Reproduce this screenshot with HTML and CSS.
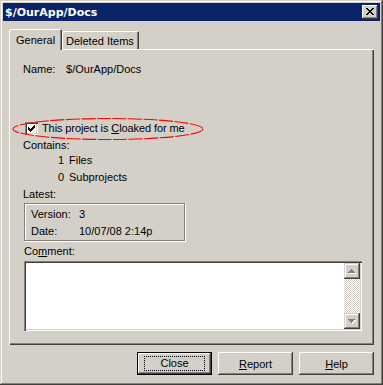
FILE: index.html
```html
<!doctype html>
<html lang="en">
<head>
  <meta charset="UTF-8">
  <title>$/OurApp/Docs</title>
  <link rel="stylesheet" href="styles.css">
</head>
<body>
  <div class="window">
    <div class="titlebar">
      <span class="title">$/OurApp/Docs</span>
      <div class="title-close">
        <svg width="8" height="7" viewBox="0 0 8 7" shape-rendering="crispEdges">
          <path fill="#000" d="M0 0h2v1h-2z M6 0h2v1h-2z M1 1h2v1h-2z M5 1h2v1h-2z M2 2h4v1h-4z M3 3h2v1h-2z M2 4h4v1h-4z M1 5h2v1h-2z M5 5h2v1h-2z M0 6h2v1h-2z M6 6h2v1h-2z"/>
        </svg>
      </div>
    </div>

    <div class="client">
      <div class="tabs">
        <div class="tab tab-active">General</div>
        <div class="tab">Deleted Items</div>
      </div>

      <div class="panel">
        <div class="line name-row">
          <span class="name-label">Name:</span>
          <span>$/OurApp/Docs</span>
        </div>

        <div class="line cloak-row">
          <span class="checkbox">
            <svg width="7" height="7" viewBox="0 0 7 7" shape-rendering="crispEdges">
              <path fill="#000" d="M0 2H1V3H2V4H3V3H4V2H5V1H6V0H7V3H6V4H5V5H4V6H3V7H2V6H1V5H0Z"/>
            </svg>
          </span>
          <span>This project is <u>C</u>loaked for me</span>
          <svg class="ring" width="192" height="24" viewBox="0 0 192 24">
            <ellipse cx="96" cy="12" rx="95" ry="10.5" fill="none" stroke="#f00" stroke-width="1.1" stroke-dasharray="14 1.5"/>
          </svg>
        </div>

        <div class="line contains">Contains:</div>
        <div class="line count count-files"><span class="num">1</span>Files</div>
        <div class="line count count-subs"><span class="num">0</span>Subprojects</div>

        <div class="line latest">Latest:</div>
        <div class="groupbox">
          <div class="line"><span class="gb-label">Version:</span>3</div>
          <div class="line gb-date"><span class="gb-label">Date:</span>10/07/08 2:14p</div>
        </div>

        <div class="line comment-label">Co<u>m</u>ment:</div>
        <div class="comment">
          <div class="comment-text"></div>
          <div class="scrollbar">
            <div class="sb-btn">
              <svg width="8" height="5" viewBox="0 0 8 5" shape-rendering="crispEdges">
                <path fill="#fff" d="M4 1h1v1h1v1h1v1h1v1h-7v-1h1v-1h1v-1h1z"/>
                <path fill="#808080" d="M3 0h1v1h1v1h1v1h1v1h-7v-1h1v-1h1v-1h1z"/>
              </svg>
            </div>
            <div class="sb-track"></div>
            <div class="sb-btn">
              <svg width="8" height="5" viewBox="0 0 8 5" shape-rendering="crispEdges">
                <path fill="#fff" d="M1 1h7v1h-1v1h-1v1h-1v1h-1v-1h-1v-1h-1v-1h-1z"/>
                <path fill="#808080" d="M0 0h7v1h-1v1h-1v1h-1v1h-1v-1h-1v-1h-1v-1h-1z"/>
              </svg>
            </div>
          </div>
        </div>
      </div>

      <div class="buttons">
        <div class="btn btn-default"><span class="focus">Close</span></div>
        <div class="btn"><span><u>R</u>eport</span></div>
        <div class="btn"><span><u>H</u>elp</span></div>
      </div>
    </div>
  </div>
</body>
</html>
```

FILE: styles.css
```css
* {
    box-sizing: border-box;
}

body {
    margin: 0;
    background: #d4d0c8;
    font-family: "Liberation Sans", Arial, sans-serif;
    font-size: 11px;
    color: #000;
}

.window {
    width: 383px;
    height: 385px;
    padding: 3px;
    background: #d4d0c8;
    box-shadow: inset -1px -1px #404040, inset 1px 1px #d4d0c8,
                inset -2px -2px #808080, inset 2px 2px #fff;
    display: flex;
    flex-direction: column;
}

.titlebar {
    height: 18px;
    background: #0a246a;
    color: #fff;
    display: flex;
    align-items: center;
    justify-content: space-between;
    padding: 0 2px 0 2px;
}

.title {
    font-family: "DejaVu Sans", Verdana, sans-serif;
    font-weight: bold;
    font-size: 11px;
}

.title-close {
    width: 16px;
    height: 14px;
    background: #d4d0c8;
    box-shadow: inset -1px -1px #404040, inset 1px 1px #fff,
                inset -2px -2px #808080;
    display: flex;
    align-items: center;
    justify-content: center;
    padding: 0 1px 1px 0;
}

.client {
    flex: 1;
    padding: 8px 6px 0 6px;
    display: flex;
    flex-direction: column;
}

.tabs {
    display: flex;
    align-items: flex-end;
    height: 20px;
    position: relative;
    z-index: 1;
}

.tab {
    height: 18px;
    padding: 2px 5px 0 4px;
    background: #d4d0c8;
    border-radius: 2px 2px 0 0;
    box-shadow: inset 1px 1px #fff, inset -1px 0 #404040, inset -2px 0 #808080;
    line-height: 16px;
}

.tab-active {
    height: 21px;
    margin-bottom: -1px;
    width: 53px;
    padding: 3px 0 0 7px;
}

.panel {
    height: 296px;
    padding: 14px 0 0 14px;
    box-shadow: inset 1px 1px #fff, inset -1px -1px #404040, inset -2px -2px #808080;
    display: flex;
    flex-direction: column;
}

.line {
    height: 13px;
    line-height: 13px;
    white-space: nowrap;
}

.name-label {
    display: inline-block;
    width: 40px;
}

.cloak-row {
    margin-top: 46px;
    margin-left: 2px;
    display: flex;
    align-items: center;
    position: relative;
    letter-spacing: -0.1px;
}

.checkbox {
    width: 13px;
    height: 13px;
    margin-right: 4px;
    background: #fff;
    box-shadow: inset 1px 1px #808080, inset 2px 2px #404040,
                inset -1px -1px #fff, inset -2px -2px #d4d0c8;
    display: flex;
    align-items: center;
    justify-content: center;
}

.ring {
    position: absolute;
    left: -13px;
    top: -5px;
}

.contains {
    margin-top: 4px;
}

.count-files {
    margin-top: 2px;
}

.count-subs,
.latest {
    margin-top: 4px;
}

.num {
    display: inline-block;
    width: 41px;
    text-align: right;
    margin-right: 5px;
}

.groupbox {
    width: 161px;
    height: 38px;
    margin: 2px 0 0 1px;
    padding: 4px 0 0 6px;
    border: 1px solid #808080;
    box-shadow: 1px 1px 0 #fff, inset 1px 1px #fff;
}

.gb-label {
    display: inline-block;
    width: 48px;
}

.gb-date {
    margin-top: 4px;
}

.comment-label {
    margin: 4px 0 0 1px;
}

.comment {
    width: 338px;
    height: 70px;
    margin: 3px 0 0 1px;
    padding: 2px;
    display: flex;
    background: #fff;
    box-shadow: inset 1px 1px #808080, inset 2px 2px #404040,
                inset -1px -1px #fff, inset -2px -2px #d4d0c8;
}

.comment-text {
    flex: 1;
}

.scrollbar {
    width: 16px;
    display: flex;
    flex-direction: column;
}

.sb-btn {
    height: 16px;
    background: #d4d0c8;
    box-shadow: inset -1px -1px #404040, inset 1px 1px #d4d0c8,
                inset -2px -2px #808080, inset 2px 2px #fff;
    display: flex;
    align-items: center;
    justify-content: center;
}

.sb-track {
    flex: 1;
    background: repeating-conic-gradient(#d4d0c8 0 25%, #fff 0 50%) 0 0 / 2px 2px;
}

.buttons {
    display: flex;
    justify-content: flex-end;
    gap: 6px;
    margin-top: 7px;
}

.btn {
    width: 75px;
    height: 23px;
    display: flex;
    align-items: center;
    justify-content: center;
    background: #d4d0c8;
    box-shadow: inset -1px -1px #404040, inset 1px 1px #fff,
                inset -2px -2px #808080;
}

.btn-default {
    border: 1px solid #000;
}

.focus {
    width: 61px;
    height: 15px;
    line-height: 13px;
    text-align: center;
    border: 1px dotted #000;
}
```
